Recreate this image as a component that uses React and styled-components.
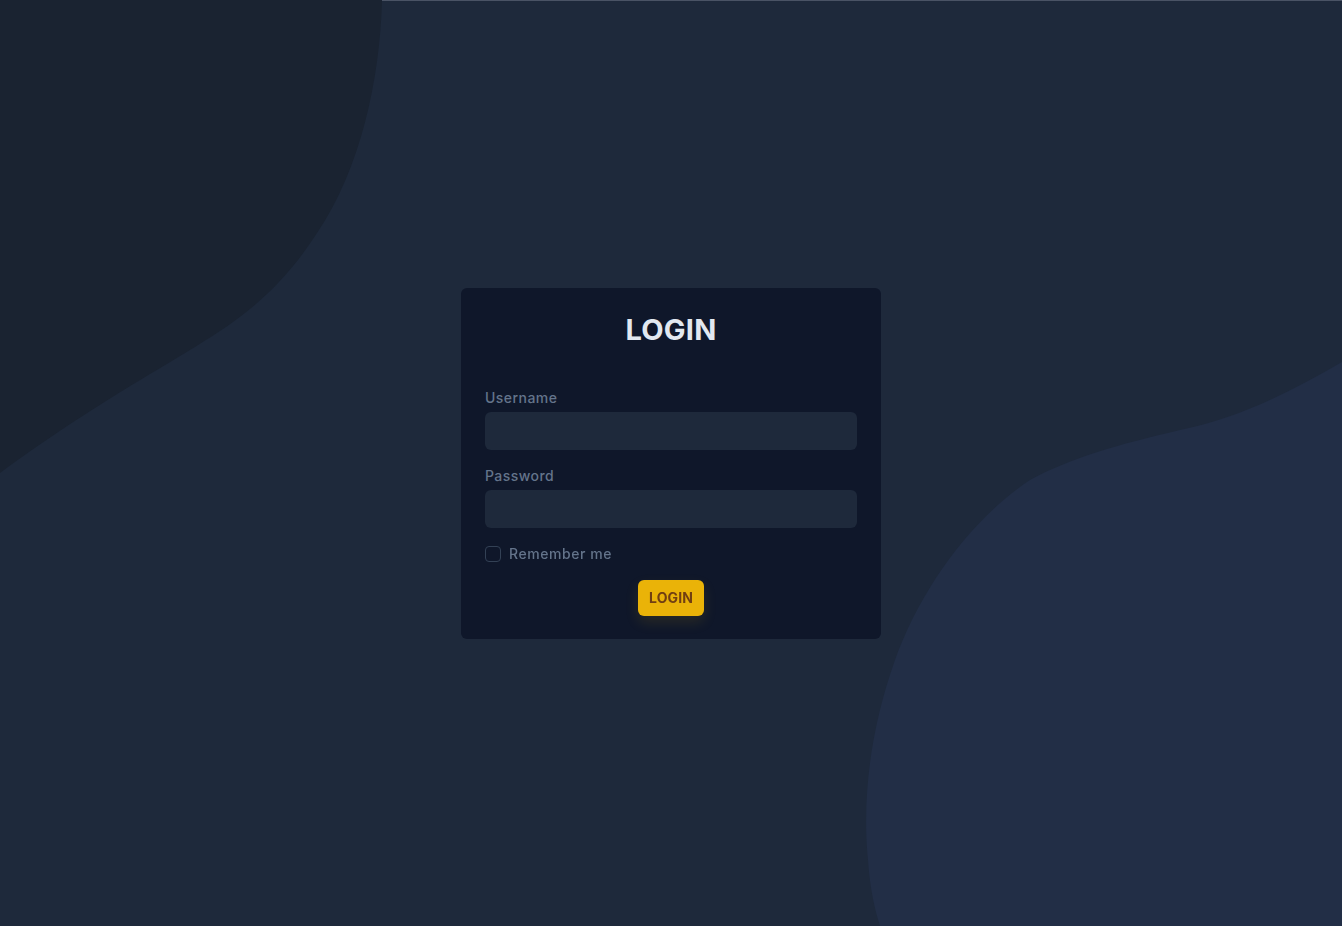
import React, { useState } from "react";
import styled, { createGlobalStyle } from "styled-components";

const GlobalStyle = createGlobalStyle`
  * { box-sizing: border-box; }
  html, body { margin: 0; padding: 0; }
  body {
    background: #1e293b;
    font-family: Inter, "Noto Sans", "Liberation Sans", sans-serif;
  }
`;

const Page = styled.main`
  position: relative;
  min-height: 100vh;
  display: flex;
  align-items: center;
  justify-content: center;
  overflow: hidden;
`;

const Backdrop = styled.svg`
  position: fixed;
  inset: 0;
  width: 100%;
  height: 100%;
  z-index: 0;
  pointer-events: none;
`;

const Card = styled.form`
  position: relative;
  z-index: 1;
  width: 420px;
  padding: 24px 24px 23px;
  background: #0f172a;
  border-radius: 6px;
  display: flex;
  flex-direction: column;
`;

const Title = styled.h1`
  margin: 0 0 40px;
  text-align: center;
  color: #e2e8f0;
  font-size: 29px;
  line-height: 36px;
  font-weight: 700;
  letter-spacing: 0.2px;
`;

const Field = styled.div`
  display: flex;
  flex-direction: column;
  gap: 4px;
  margin-bottom: 16px;
`;

const Label = styled.label`
  color: #64748b;
  font-size: 14px;
  line-height: 20px;
  font-weight: 500;
  letter-spacing: 0.45px;
`;

const Input = styled.input`
  height: 38px;
  border: none;
  border-radius: 6px;
  background: #1e293b;
  color: #e2e8f0;
  padding: 0 12px;
  font-size: 14px;
  outline: none;
`;

const CheckRow = styled.label`
  display: flex;
  align-items: center;
  gap: 8px;
  height: 20px;
  margin-bottom: 16px;
  color: #64748b;
  font-size: 14px;
  font-weight: 500;
  letter-spacing: 0.55px;
  cursor: pointer;
`;

const Check = styled.input`
  appearance: none;
  margin: 0;
  width: 16px;
  height: 16px;
  border: 1px solid #334155;
  border-radius: 4px;
  background: #0f172a;
  &:checked {
    background: #eab308;
    border-color: #eab308;
  }
`;

const Submit = styled.button`
  align-self: center;
  height: 36px;
  padding: 0 11px;
  border: none;
  border-radius: 6px;
  background: #eab308;
  color: #713f12;
  font-family: inherit;
  font-size: 14px;
  font-weight: 700;
  letter-spacing: 0.1px;
  box-shadow: 0 6px 14px rgba(234, 179, 8, 0.12);
  cursor: pointer;
`;

export default function App() {
  const [remember, setRemember] = useState(false);

  return (
    <>
      <GlobalStyle />
      <Page>
        <Backdrop viewBox="0 0 1342 926" preserveAspectRatio="none">
          <rect x="0" y="0" width="1342" height="1" fill="#4a5365" />
          <path
            d="M0 0 L382 0 C380 80 360 170 317 233 C290 275 260 305 217 333 C160 370 100 400 0 473 Z"
            fill="#1a2331"
          />
          <path
            d="M1342 362 C1290 392 1240 418 1180 430 C1120 444 1070 458 1030 480 C970 520 920 590 895 660 C870 730 862 800 868 860 C870 890 875 910 880 926 L1342 926 Z"
            fill="#222e46"
          />
        </Backdrop>
        <Card onSubmit={(e) => e.preventDefault()}>
          <Title>LOGIN</Title>
          <Field>
            <Label htmlFor="username">Username</Label>
            <Input id="username" type="text" />
          </Field>
          <Field>
            <Label htmlFor="password">Password</Label>
            <Input id="password" type="password" />
          </Field>
          <CheckRow>
            <Check
              type="checkbox"
              checked={remember}
              onChange={(e) => setRemember(e.target.checked)}
            />
            Remember me
          </CheckRow>
          <Submit type="submit">LOGIN</Submit>
        </Card>
      </Page>
    </>
  );
}
